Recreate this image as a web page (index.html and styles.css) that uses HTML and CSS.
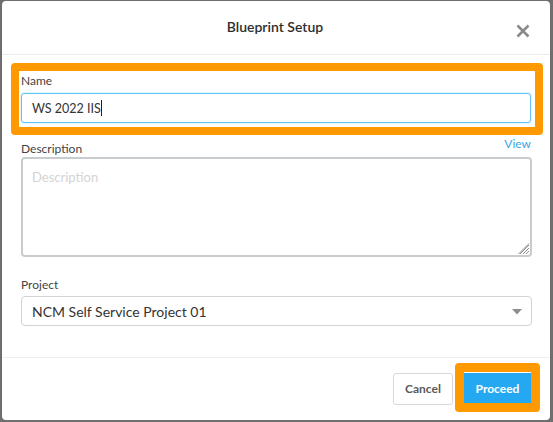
FILE: index.html
```html
<!DOCTYPE html>
<html>
<head>
<meta charset="utf-8">
<link rel="stylesheet" href="styles.css">
</head>
<body>
<div class="modal">
  <div class="header">
    <span></span>
    <h1 class="title">Blueprint Setup</h1>
    <button class="close" aria-label="Close">
      <svg width="14" height="14" viewBox="0 0 14 14"><path d="M1.5 1.5 L12.5 12.5 M12.5 1.5 L1.5 12.5" stroke="#8a8a8a" stroke-width="2.6" stroke-linecap="butt"/></svg>
    </button>
  </div>
  <div class="body">
    <div class="highlight name-group">
      <label class="label">Name</label>
      <div class="input focused"><span class="value">WS 2022 IIS</span><span class="caret"></span></div>
    </div>
    <div class="desc-head">
      <label class="label">Description</label>
      <a class="view">View</a>
    </div>
    <div class="textarea">
      <span class="placeholder">Description</span>
      <svg class="grip" width="12" height="12" viewBox="0 0 12 12"><path d="M11 2 L2 11 M11 5 L5 11 M11 8 L8 11 M11 0.5 L0.5 11" stroke="#8c8c8c" stroke-width="1"/></svg>
    </div>
    <label class="label project-label">Project</label>
    <div class="select">
      <span class="value">NCM Self Service Project 01</span>
      <svg width="10" height="6" viewBox="0 0 10 6"><path d="M0 0 H10 L5 5.5 Z" fill="#8d8d8d"/></svg>
    </div>
  </div>
  <div class="footer">
    <button class="btn cancel">Cancel</button>
    <div class="highlight proceed-wrap">
      <button class="btn proceed">Proceed</button>
    </div>
  </div>
</div>
</body>
</html>
```
FILE: styles.css
```css
* { box-sizing: border-box; }
html, body { margin: 0; padding: 0; }
body {
  background: #6e6e6e;
  width: 553px;
  height: 422px;
  padding: 1px 3px 2px 2px;
  font-family: "Lato", "Open Sans", sans-serif;
  color: #333;
}
.modal {
  background: #fff;
  border-radius: 4px;
  height: 419px;
  display: flex;
  flex-direction: column;
}
.header {
  height: 54px;
  border-bottom: 1px solid #ececec;
  display: grid;
  grid-template-columns: 1fr auto 1fr;
  align-items: center;
  padding: 0 20px 0 18px;
}
.title {
  margin: 0;
  font-size: 14px;
  font-weight: 600;
  color: #2e2e2e;
  padding-bottom: 2px;
}
.close {
  justify-self: end;
  border: 0;
  background: none;
  padding: 0;
  width: 14px;
  height: 14px;
  margin-top: 7px;
  display: flex;
}
.body {
  flex: 1;
  padding: 8px 18px 0 19px;
  display: flex;
  flex-direction: column;
}
.highlight {
  border: 8px solid #ff9900;
  border-radius: 4px;
}
.name-group {
  margin: 0 -11px 0 -10px;
  padding: 2px 4px 4px 2px;
  display: flex;
  flex-direction: column;
}
.label {
  font-size: 12px;
  color: #444;
  line-height: 14px;
  display: block;
}
.name-group .label { margin-bottom: 5px; margin-top: 1px; }
.input {
  height: 30px;
  border: 1px solid #5ec3f2;
  border-radius: 3px;
  display: flex;
  align-items: center;
  padding: 0 10px;
  font-size: 12.5px;
  color: #333;
  box-shadow: 0 0 0 1px #e3f5fd;
}
.caret {
  width: 1px;
  height: 16px;
  background: #222;
}
.desc-head {
  display: flex;
  justify-content: space-between;
  align-items: flex-start;
  margin-top: 1px;
  height: 21px;
}
.desc-head .label { margin-top: 6px; }
.view {
  color: #3aa5e8;
  font-size: 12px;
  line-height: 14px;
  margin-top: 1px;
  margin-right: 1px;
}
.textarea {
  height: 100px;
  border: 2px solid #c9cccf;
  border-radius: 4px;
  position: relative;
  padding: 7px 9px;
}
.placeholder {
  font-size: 13px;
  color: #d4d4d4;
}
.grip {
  position: absolute;
  right: 0;
  bottom: 0;
}
.project-label { margin-top: 21px; margin-bottom: 4px; }
.select {
  height: 30px;
  border: 1px solid #d3d3d3;
  border-radius: 4px;
  display: flex;
  align-items: center;
  justify-content: space-between;
  padding: 0 9px 0 10px;
  font-size: 14px;
  color: #333;
}
.select svg { margin-top: 2px; }
.footer {
  height: 63px;
  border-top: 1px solid #efefef;
  display: flex;
  justify-content: flex-end;
  align-items: center;
  padding: 0 10px 3px 0;
  gap: 2px;
}
.btn {
  font-family: inherit;
  font-size: 12px;
  font-weight: 700;
  height: 32px;
  border-radius: 3px;
  cursor: pointer;
}
.cancel {
  width: 60px;
  background: #fff;
  border: 1px solid #d9d9d9;
  color: #5a5a5a;
  margin-top: 2px;
}
.proceed-wrap {
  padding: 0;
  border-width: 9px;
  display: flex;
}
.proceed {
  width: 67px;
  height: 31px;
  background: #25a8f2;
  color: #fff;
  border: 0;
  border-top: 1px solid #fff;
  border-radius: 0;
}
```
